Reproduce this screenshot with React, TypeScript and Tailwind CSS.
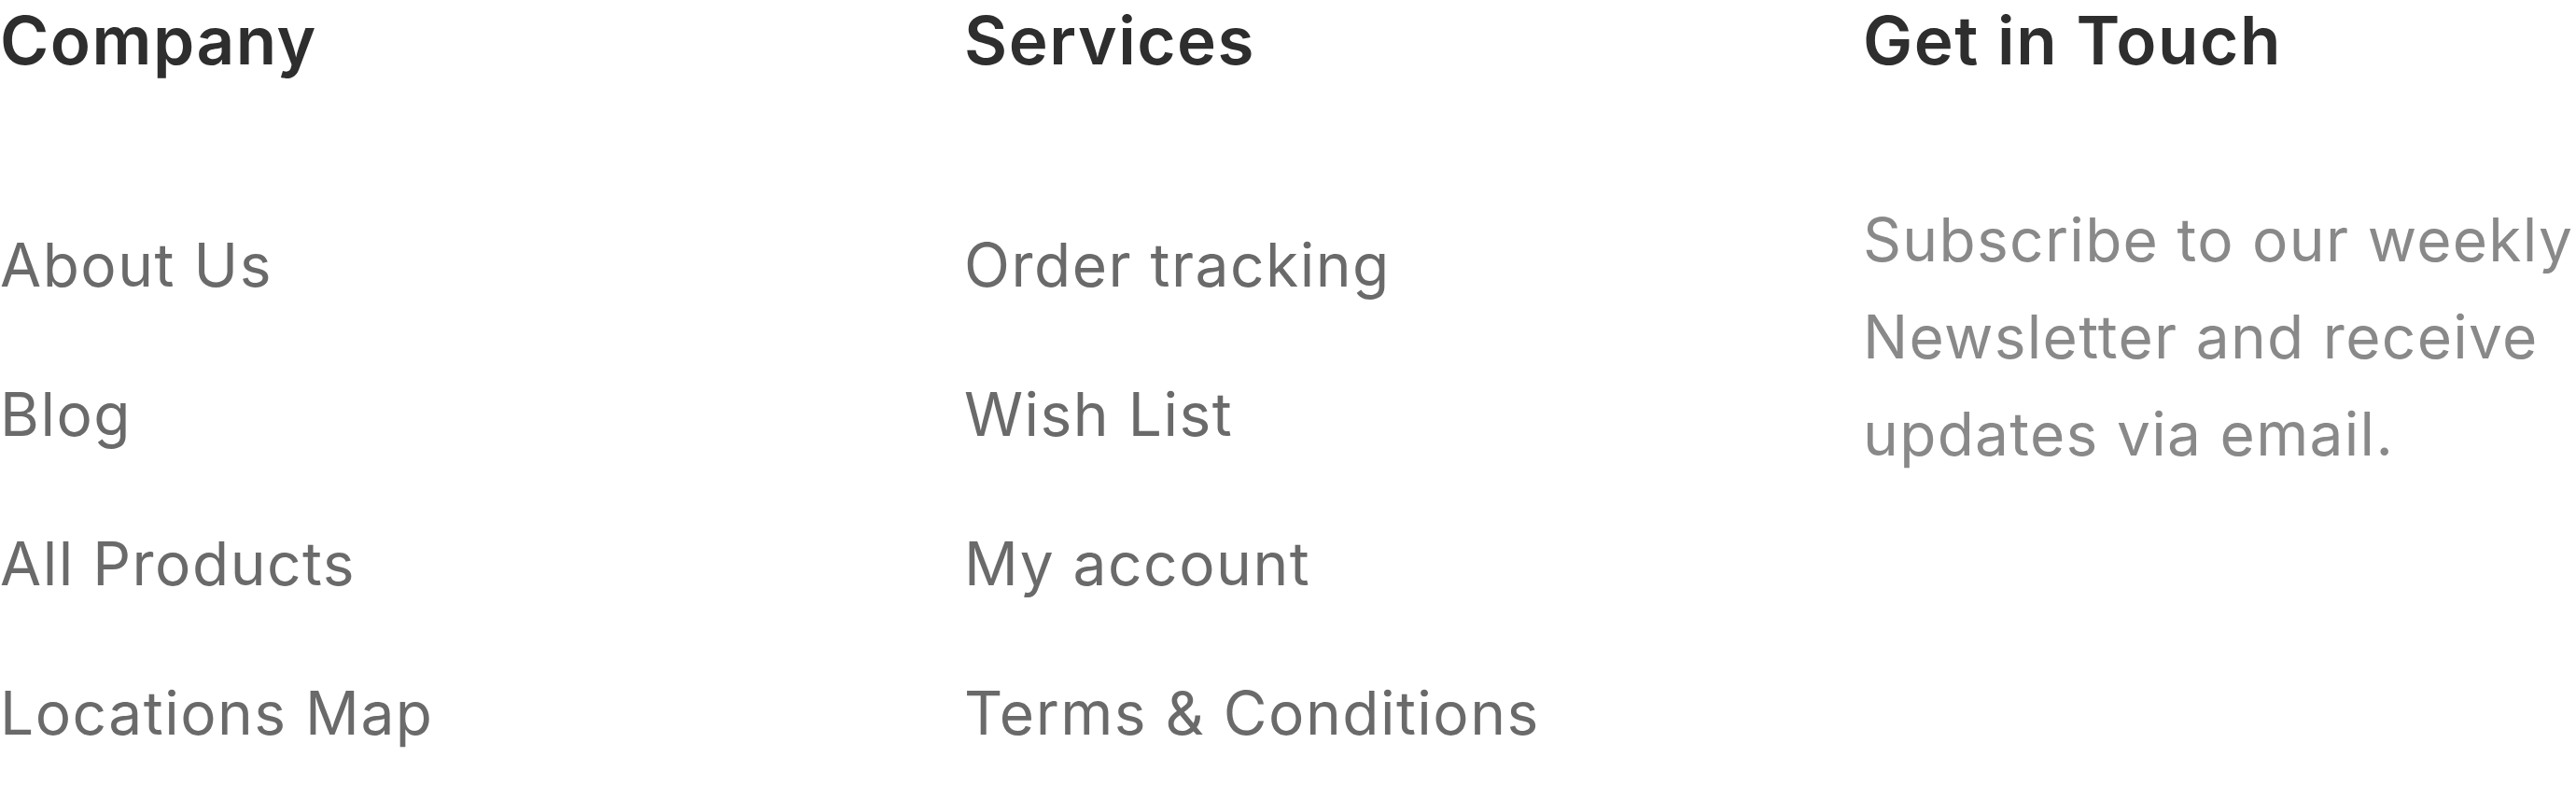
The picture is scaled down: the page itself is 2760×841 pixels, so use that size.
import React from 'react';

const company = ['About Us', 'Blog', 'All Products', 'Locations Map'];
const services = ['Order tracking', 'Wish List', 'My account', 'Terms & Conditions'];

const Heading: React.FC<{ children: React.ReactNode }> = ({ children }) => (
  <h3 className="text-[71px] leading-[86px] font-semibold text-[#2e2e2e] tracking-[1.5px] whitespace-nowrap">{children}</h3>
);

const FooterColumn: React.FC<{ title: string; links: string[]; className: string }> = ({ title, links, className }) => (
  <div className={className}>
    <Heading>{title}</Heading>
    <ul className="mt-[118px]">
      {links.map((link) => (
        <li key={link} className="text-[64px] leading-[160px] text-[#6a6a6a] tracking-[1.5px] whitespace-nowrap">
          <a href="#">{link}</a>
        </li>
      ))}
    </ul>
  </div>
);

export default function App() {
  return (
    <footer className="w-[2760px] h-[841px] bg-white font-['Inter','Noto_Sans',sans-serif] overflow-hidden">
      <div className="flex">
        <FooterColumn title="Company" links={company} className="w-[1033px] shrink-0" />
        <FooterColumn title="Services" links={services} className="w-[963px] shrink-0" />
        <div className="flex-1 min-w-0">
          <Heading>Get in Touch</Heading>
          <p className="mt-[119px] text-[64px] leading-[104px] text-[#898989] tracking-[1.3px] whitespace-nowrap">
            Subscribe to our weekly
            <br />
            Newsletter and receive
            <br />
            updates via email.
          </p>
        </div>
      </div>
    </footer>
  );
}
